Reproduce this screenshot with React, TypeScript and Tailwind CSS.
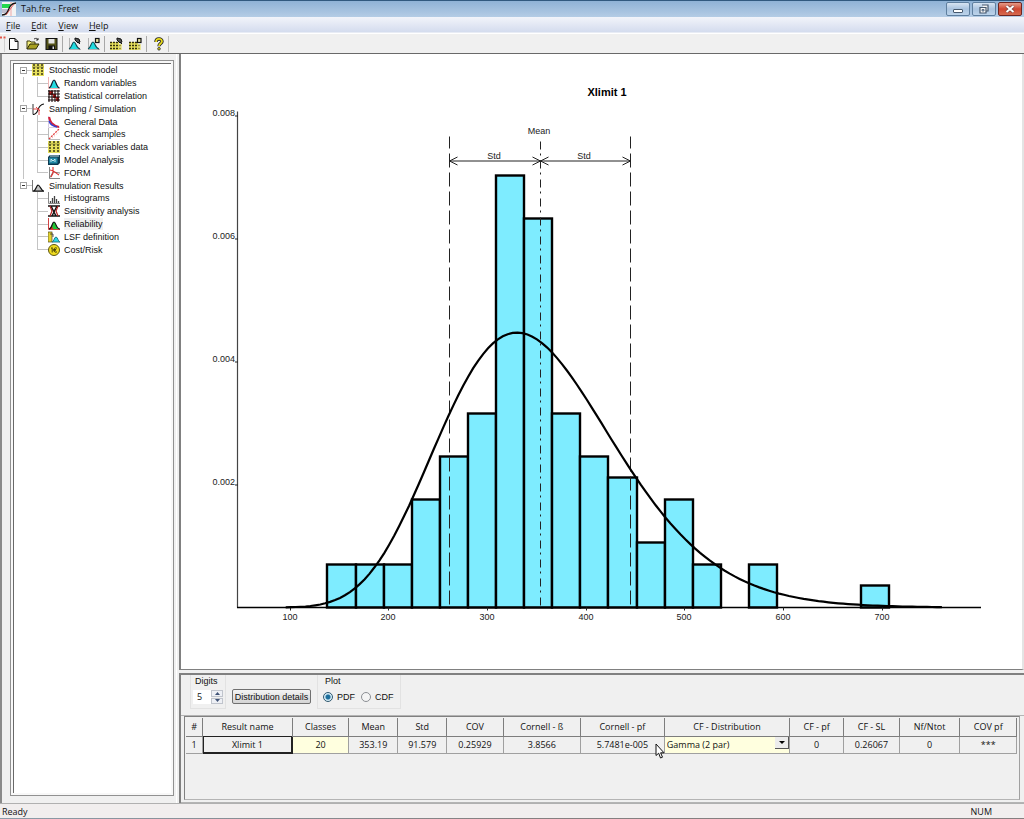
import type { ReactNode } from "react";

const SANS = "font-['Liberation_Sans',sans-serif]";
const HUMANIST = "font-['Open_Sans','Noto_Sans',sans-serif]";

/* ---------- icons ---------- */

type IconName =
  | "table" | "bell" | "matrix" | "sampling" | "decay" | "scatter" | "model" | "form"
  | "results" | "histogram" | "hourglass" | "reliability" | "lsf" | "cost";

const dottedTable = (
  <>
    <rect x="0" y="0" width="12" height="12" fill="#e6df5c" />
    <path d="M2 0v12M6 0v12M10 0v12" stroke="#2c2a10" strokeWidth="1.4" strokeDasharray="2 1" />
    <path d="M0 3h12" stroke="#77722c" strokeWidth=".6" />
  </>
);

const icons: Record<IconName, ReactNode> = {
  table: dottedTable,
  bell: (
    <>
      <path d="M.5 0v11.500h11" stroke="#f0b4b4" fill="none" />
      <path d="M1 11C4 10 4 3 6 3s2 7 5.500 8z" fill="#23dbe0" />
      <path d="M1 11C4 10 4 3 6 3s2 7 5.500 8" stroke="#123" strokeWidth="1.200" fill="none" />
    </>
  ),
  matrix: (
    <>
      <rect width="12" height="12" fill="#fff" />
      <path d="M1 1h4v3h3v3h3v4H8V8H5V5H1z" fill="#d32020" />
      <path d="M0 1h12M0 4h12M0 7h12M0 10h12M1 0v12M4 0v12M7 0v12M10 0v12" stroke="#1c0d0d" strokeWidth="1.100" />
    </>
  ),
  sampling: (
    <>
      <path d="M1 1v10.500" stroke="#333" fill="none" />
      <path d="M1 11.500c7 0 3-10 11-10.500" stroke="#111" strokeWidth="1.200" fill="none" />
      <path d="M1 6h6v6M4 4l4 4" stroke="#e23a3a" strokeWidth=".9" fill="none" />
    </>
  ),
  decay: (
    <>
      <path d="M.5 0v11.500H12" stroke="#d9cde2" fill="none" />
      <path d="M1 1c1 5 3 8 10 10" stroke="#d3203a" strokeWidth="2.200" fill="none" />
      <path d="M1 5c1 3 3 5 8 6" stroke="#3340d0" strokeWidth="1.400" fill="none" />
    </>
  ),
  scatter: (
    <>
      <path d="M.5 0v11.500H12" stroke="#bbb" fill="none" />
      <path d="M1 11L11 1" stroke="#e23a3a" strokeWidth="1.300" strokeDasharray="2 1" />
      <path d="M4 10l7-6" stroke="#f0a0a0" strokeDasharray="1 2" />
    </>
  ),
  model: (
    <>
      <path d="M0 3l2-2h10v8l-2 2H0z" fill="#0d3950" />
      <rect x="1" y="3.500" width="8.500" height="6" fill="#2489a6" />
      <path d="M3 8V5l2 2 2-2v3M2 2h9" stroke="#d8f3f7" strokeWidth=".9" fill="none" />
    </>
  ),
  form: (
    <>
      <path d="M1.500 0v11.500H12M1.500 11L5 5l7 1" stroke="#777" strokeWidth=".9" fill="none" />
      <path d="M2 3c4 0 5 3 9 5M5 0v6L3 10" stroke="#e02a2a" strokeWidth="1.100" fill="none" />
    </>
  ),
  results: (
    <>
      <path d="M.5 0v11.500H12" stroke="#777" fill="none" />
      <path d="M1 11c3 0 3-5 5-6 2 0 3 6 6 6z" fill="#c3c3c3" stroke="#111" strokeWidth="1.200" />
    </>
  ),
  histogram: (
    <>
      <path d="M.5 0v11.500H12" stroke="#888" fill="none" />
      <path d="M2.500 11V9M4.500 11V6M6.500 11V4M8.500 11V7M10.500 11V9" stroke="#444" strokeWidth="1.300" />
    </>
  ),
  hourglass: (
    <>
      <path d="M0 1h12M0 11h12M3 1l5 10M9 1L4 11" stroke="#111" strokeWidth="1.500" />
      <path d="M2 1l2 5-2 5M10 1L8 6l2 5" stroke="#b52020" strokeWidth="1.200" fill="none" />
    </>
  ),
  reliability: (
    <>
      <path d="M.5 0v11.500H12" stroke="#d24343" fill="none" />
      <path d="M1 11c3 0 3-7 5-7s2 7 6 7z" fill="#1fc634" />
      <path d="M1 11l3-3 1 3z" fill="#df2020" />
      <path d="M1 11c3 0 3-7 5-7s2 7 6 7" stroke="#111" strokeWidth="1.200" fill="none" />
    </>
  ),
  lsf: (
    <>
      <rect x="0" y="1" width="4" height="10" fill="#e4d431" stroke="#4b4620" strokeWidth=".7" />
      <path d="M4 11c2 0 2-5 4-5s2 5 4 5z" fill="#29d6e5" stroke="#1c7080" strokeWidth=".9" />
      <path d="M2 3h3v3" stroke="#333" strokeWidth=".8" fill="none" />
    </>
  ),
  cost: (
    <>
      <circle cx="6" cy="6" r="5.500" fill="#f0dc20" stroke="#5d5510" />
      <path d="M3 4.500L4.200 3.500V8.500M9 4.200C6.500 3 5.800 5 5.900 6s.8 3 3.100 1.900M5.400 5.500h2.800M5.400 6.700h2.500" stroke="#3a3508" strokeWidth=".9" fill="none" />
    </>
  ),
};

function Icon({ name }: { name: IconName }) {
  return (
    <svg viewBox="0 0 12 12" className="size-3 shrink-0" aria-hidden="true">
      {icons[name]}
    </svg>
  );
}

/* ---------- toolbar ---------- */

const curveTool = (
  <>
    <path d="M1.500 1v11.500H13" stroke="#999" strokeWidth=".7" fill="none" />
    <path d="M1 12c3-1 3-7 5-7s2 6 6 7z" fill="#20dce0" />
    <path d="M1 12c3-1 3-7 5-7s2 6 6 7" stroke="#124a55" strokeWidth="1.100" fill="none" />
  </>
);
const gridTool = (
  <>
    <path d="M0 5h9v8H0z" fill="#e6df5c" />
    <path d="M0 5.500h9M0 8.500h12M0 11.500h12" stroke="#35320f" strokeWidth="1.300" strokeDasharray="2 1" />
    <path d="M9 7h3v6H9z" fill="#e6df5c" fillOpacity=".6" />
  </>
);
const hand = <path d="M7 1l4 1 1 3-2 1-3-3zM10 5l2 2" fill="#555" stroke="#111" strokeWidth="1" />;
const sheet = <rect x="8.500" y="1.500" width="3.500" height="4" fill="#e8e4a0" stroke="#111" strokeWidth="1.200" />;

const tools: { label: string; gap?: boolean; art: ReactNode }[] = [
  { label: "New", art: <path d="M2.500 1.500h5.500l3 3v8h-8.500zM8 1.500v3h3" fill="#fff" stroke="#111" /> },
  {
    label: "Open",
    art: (
      <>
        <path d="M1 12V4h3l1 1h4v2" fill="#f2ec7a" stroke="#3c3a10" />
        <path d="M1 12l3-5h9l-3 5z" fill="#a8a022" stroke="#2d2b08" />
        <path d="M8 2c2-1 3-1 4 1m0-2v2h-2" stroke="#222" fill="none" strokeWidth=".9" />
      </>
    ),
  },
  {
    label: "Save",
    art: (
      <>
        <rect x="1" y="1.500" width="11" height="11" fill="#55541a" stroke="#111" />
        <rect x="3.500" y="2" width="6" height="4.500" fill="#e4e4e4" />
        <rect x="3.500" y="8.500" width="6.500" height="4" fill="#111" />
        <rect x="7.500" y="9.500" width="1.500" height="2.500" fill="#ddd" />
      </>
    ),
  },
  { label: "Edit variable", gap: true, art: <>{curveTool}{hand}</> },
  { label: "Copy variable", art: <>{curveTool}{sheet}</> },
  { label: "Edit table", gap: true, art: <>{gridTool}{hand}</> },
  { label: "Copy table", art: <>{gridTool}{sheet}</> },
  {
    label: "Help topics",
    gap: true,
    art: (
      <>
        <path d="M4 5c0-4 6-4 6-.5C10 6.500 7 6.500 7 9.200" stroke="#222" strokeWidth="3.400" fill="none" />
        <path d="M4 5c0-4 6-4 6-.5C10 6.500 7 6.500 7 9" stroke="#e9dc1c" strokeWidth="1.700" fill="none" />
        <circle cx="7" cy="11.800" r="1.300" fill="#e9dc1c" stroke="#222" strokeWidth=".8" />
      </>
    ),
  },
];

function Toolbar() {
  return (
    <div className="flex h-5 items-center border-t border-white bg-[#f0f0f0]">
      <svg viewBox="0 0 6 16" className="h-4 w-1.5 shrink-0" aria-hidden="true">
        <path d="M0 1.500h2M3.500 1.500h2" stroke="#e0574a" strokeWidth="2" />
        <path d="M4.500 3v13" stroke="#d0d0d0" />
      </svg>
      {tools.map((t, i) => (
        <div key={t.label} className={i === 0 ? "-ml-0.5 flex items-center" : "flex items-center"}>
          {t.gap && <span className="ml-px mr-0.5 h-4 w-px bg-[#a8a8a8]" />}
          <button type="button" aria-label={t.label} className="flex w-[19px] justify-center">
            <svg viewBox="0 0 14 14" className="size-3.5" aria-hidden="true">{t.art}</svg>
          </button>
        </div>
      ))}
      <span className="h-4 w-px bg-[#c0c0c0]" />
    </div>
  );
}

/* ---------- tree ---------- */

const tree: { label: string; icon: IconName; children: { label: string; icon: IconName }[] }[] = [
  {
    label: "Stochastic model", icon: "table",
    children: [
      { label: "Random variables", icon: "bell" },
      { label: "Statistical correlation", icon: "matrix" },
    ],
  },
  {
    label: "Sampling / Simulation", icon: "sampling",
    children: [
      { label: "General Data", icon: "decay" },
      { label: "Check samples", icon: "scatter" },
      { label: "Check variables data", icon: "table" },
      { label: "Model Analysis", icon: "model" },
      { label: "FORM", icon: "form" },
    ],
  },
  {
    label: "Simulation Results", icon: "results",
    children: [
      { label: "Histograms", icon: "histogram" },
      { label: "Sensitivity analysis", icon: "hourglass" },
      { label: "Reliability", icon: "reliability" },
      { label: "LSF definition", icon: "lsf" },
      { label: "Cost/Risk", icon: "cost" },
    ],
  },
];

function Tree() {
  const rows = tree.flatMap((g, gi) => [
    { ...g, level: 0, last: false, trunk: false },
    ...g.children.map((c, ci) => ({
      ...c, level: 1, last: ci === g.children.length - 1, trunk: gi < tree.length - 1,
    })),
  ]);
  return (
    <nav aria-label="Model" className={`grid h-48 auto-rows-fr pl-[5px] text-[9px] leading-3 text-[#111] ${SANS}`}>
      {rows.map((r) =>
        r.level === 0 ? (
          <div key={r.label} className="flex items-stretch">
            <span className="flex w-[14px] items-center">
              <button type="button" aria-label={`Collapse ${r.label}`} className="ml-0.5 flex size-[7px] items-center justify-center border border-[#a5a5a5] bg-white">
                <span className="h-px w-[3px] bg-[#333]" />
              </button>
              <span className="h-px flex-1 bg-[#c4c4c4]" />
            </span>
            <a href="#" className="flex items-center gap-[5px]"><Icon name={r.icon} />{r.label}</a>
          </div>
        ) : (
          <div key={r.label} className="flex items-stretch">
            <span className={`ml-[5px] w-[14px] border-l ${r.trunk ? "border-[#c4c4c4]" : "border-transparent"}`} />
            <span className="flex w-[11px] flex-col">
              <span className="flex-1 border-b border-l border-[#c4c4c4]" />
              <span className={`flex-1 border-l ${r.last ? "border-transparent" : "border-[#c4c4c4]"}`} />
            </span>
            <a href="#" className="flex items-center gap-1">
              <Icon name={r.icon} />
              <span className={r.label === "Reliability" ? "bg-[#f0f0f0]" : ""}>{r.label}</span>
            </a>
          </div>
        ),
      )}
    </nav>
  );
}

/* ---------- chart ---------- */

const MEAN = 353.19;
const STD = 91.579;
const BASE = 552;
const px = (v: number) => 10 + v * 0.9867;
const py = (d: number) => BASE - d * 61500;

const binStart = 138.300;
const binWidth = 28.480;
const unit = 21.600;
const counts = [2, 2, 2, 5, 7, 9, 20, 18, 9, 7, 6, 3, 5, 2, 0, 2, 0, 0, 0, 1];
const edge = (i: number) => Math.round(px(binStart + i * binWidth));

const shape = (MEAN / STD) ** 2;
const scale = (STD * STD) / MEAN;
const mode = (shape - 1) * scale;
const peak = 0.00447;
const density = (x: number) =>
  peak * Math.exp((shape - 1) * Math.log(x / mode) - (x - mode) / scale);
const curve = Array.from({ length: 134 }, (_, i) => 95 + i * 5)
  .map((x, i) => `${i ? "L" : "M"}${px(x + 1).toFixed(1)} ${py(density(x)).toFixed(1)}`)
  .join("");

function Chart() {
  const low = Math.round(px(MEAN - STD)) + 0.5;
  const high = Math.round(px(MEAN + STD)) + 0.5;
  const mid = Math.ceil(px(MEAN)) + 0.5;
  return (
    <svg viewBox="0 -1 841 614" className={`block h-full w-full ${SANS}`} role="img" aria-label="Histogram of Xlimit 1">
      <g fill="#7eecff" stroke="#000" strokeWidth="2.400">
        {counts.map((n, i) => {
          const h = Math.round(n * unit);
          return n ? <rect key={i} x={edge(i)} y={BASE - h} width={edge(i + 1) - edge(i)} height={h} /> : null;
        })}
      </g>
      <path d="M56.500 56V552" stroke="#444" strokeWidth="1.200" />
      <path d="M56 552H800" stroke="#000" strokeWidth="1.600" />
      {[0.002, 0.004, 0.006, 0.008].map((d) => (
        <g key={d}>
          <path d={`M54 ${Math.round(py(d)) + 0.5}h3`} stroke="#222" />
          <text x="54" y={Math.round(py(d))} textAnchor="end" fontSize="9" fill="#222">{d}</text>
        </g>
      ))}
      {[100, 200, 300, 400, 500, 600, 700].map((v) => (
        <g key={v}>
          <path d={`M${Math.round(px(v)) + 0.5} 552v3`} stroke="#222" />
          <text x={Math.round(px(v))} y="564" textAnchor="middle" fontSize="9" fill="#222">{v}</text>
        </g>
      ))}
      <g stroke="#222" fill="none">
        <path d={`M${low} 81V552`} strokeDasharray="14 5" strokeDashoffset="2" />
        <path d={`M${high} 81V552`} strokeDasharray="14 5" strokeDashoffset="2" />
        <path d={`M${mid} 86V552`} strokeDasharray="8 4 2 5" />
        <path d={`M${low} 105.500H${high}`} />
        <path d={`M${low + 8} 101.500L${low} 105.500l8 4M${mid - 8} 101.500L${mid} 105.500l-8 4M${mid + 8} 101.500L${mid} 105.500l8 4M${high - 8} 101.500L${high} 105.500l-8 4`} />
      </g>
      <path d={curve} fill="none" stroke="#000" strokeWidth="2.200" />
      <g fill="#222" fontSize="9" textAnchor="middle">
        <text x="358" y="78">Mean</text>
        <text x="313" y="103">Std</text>
        <text x="403" y="103">Std</text>
      </g>
      <text x="426" y="40" textAnchor="middle" fontSize="11" fontWeight="700">Xlimit 1</text>
    </svg>
  );
}

/* ---------- controls and table ---------- */

function Controls() {
  return (
    <form className={`flex h-[39px] items-start pl-[9px] text-[9px] leading-3 text-[#111] ${SANS}`}>
      <div className="flex h-[34px] w-9 flex-col border border-t-0 border-[#e2e2e2]">
        <label htmlFor="digits" className="pl-1">Digits</label>
        <div className="mt-[3px] flex h-[14px] pl-0.5">
          <input id="digits" type="text" defaultValue="5" className={`w-[18px] bg-white pl-1 text-[9px] ${HUMANIST}`} />
          <span className="flex w-3 flex-col gap-px">
            <button type="button" aria-label="Increase" className="flex flex-1 items-center justify-center border border-[#c0c4cc] bg-[#eef0f5]">
              <svg viewBox="0 0 5 3" className="h-[3px] w-[5px]"><path d="M0 3L2.500 0 5 3z" fill="#3f5276" /></svg>
            </button>
            <button type="button" aria-label="Decrease" className="flex flex-1 items-center justify-center border border-[#c0c4cc] bg-[#eef0f5]">
              <svg viewBox="0 0 5 3" className="h-[3px] w-[5px]"><path d="M0 0L2.500 3 5 0z" fill="#3f5276" /></svg>
            </button>
          </span>
        </div>
      </div>
      <button type="button" className="ml-1.5 mt-[14px] flex h-[15px] w-[79px] items-center justify-center whitespace-nowrap rounded-[2px] border border-[#707070] bg-linear-to-b from-[#f4f4f4] to-[#d4d4d4] leading-3">
        Distribution details
      </button>
      <fieldset className="ml-1.5 h-[34px] w-[80px] border border-t-0 border-[#e2e2e2]">
        <legend className="float-left w-full pl-[7px]">Plot</legend>
        <div className="flex w-full items-center pl-[5px] pt-1">
          {["PDF", "CDF"].map((p) => (
            <label key={p} className="mr-1.5 flex items-center gap-1">
              <input type="radio" name="plot" defaultChecked={p === "PDF"} className="size-2.5 appearance-none rounded-full border border-[#8c8f94] bg-[#f4f4f4] checked:border-[#31586f] checked:bg-[radial-gradient(circle,#1d6f9c_35%,#d8eef8_55%)]" />
              {p}
            </label>
          ))}
        </div>
      </fieldset>
    </form>
  );
}

const columns: { head: string; value: string; width: string }[] = [
  { head: "#", value: "1", width: "w-[2%]" },
  { head: "Result name", value: "Xlimit 1", width: "w-[10.8%]" },
  { head: "Classes", value: "20", width: "w-[6.8%]" },
  { head: "Mean", value: "353.19", width: "w-[5.9%]" },
  { head: "Std", value: "91.579", width: "w-[5.9%]" },
  { head: "COV", value: "0.25929", width: "w-[6.8%]" },
  { head: "Cornell - ß", value: "3.8566", width: "w-[9.3%]" },
  { head: "Cornell - pf", value: "5.7481e-005", width: "w-[10.1%]" },
  { head: "CF - Distribution", value: "Gamma (2 par)", width: "w-[15.1%]" },
  { head: "CF - pf", value: "0", width: "w-[6.5%]" },
  { head: "CF - SL", value: "0.26067", width: "w-[6.7%]" },
  { head: "Nf/Ntot", value: "0", width: "w-[7.3%]" },
  { head: "COV pf", value: "***", width: "w-[6.8%]" },
];

function cellStyle(head: string) {
  if (head === "Result name") return "outline-1 -outline-offset-1 outline-[#222] border-[#222]";
  if (head === "Classes" || head === "CF - Distribution") return "bg-[#ffffdf] border-[#a0a0a0]";
  return "border-[#a0a0a0]";
}

function ResultTable() {
  return (
    <table className={`w-full table-fixed border-collapse text-center text-[9px] leading-3 text-[#111] ${HUMANIST}`}>
      <thead>
        <tr className="h-[18px]">
          {columns.map((c) => (
            <th key={c.head} scope="col" className={`whitespace-nowrap border border-t-0 border-l-0 border-[#7d7d7d] p-0 font-normal ${c.width}`}>
              {c.head}
            </th>
          ))}
        </tr>
      </thead>
      <tbody>
        <tr className="h-[17px]">
          {columns.map((c) => (
            <td key={c.head} className={`border border-l-0 p-0 ${cellStyle(c.head)}`}>
              {c.head === "CF - Distribution" ? (
                <span className="flex h-4 items-center">
                  <select aria-label="CF - Distribution" className="min-w-0 flex-1 appearance-none bg-transparent pl-0.5 text-left">
                    <option>Gamma (2 par)</option>
                  </select>
                  <span className="pointer-events-none mb-1 flex h-3 w-[14px] items-center justify-center border-b border-r border-[#555] bg-[#ececec]">
                    <svg viewBox="0 0 6 3" className="h-[3px] w-1.5"><path d="M0 0h6L3 3z" /></svg>
                  </span>
                </span>
              ) : c.value}
            </td>
          ))}
        </tr>
      </tbody>
    </table>
  );
}

/* ---------- window ---------- */

function TitleBar() {
  const btn = "flex h-[14px] w-6 items-center justify-center rounded-[2px] border";
  const plain = "border-[#5f7f9f] bg-linear-to-b from-[#d7e4f2] via-[#a9c3df] to-[#bcd3ea]";
  return (
    <header className={`flex h-[17px] shrink-0 items-center border-t border-[#31597f] bg-linear-to-b from-[#8fb2d6] to-[#b4cce5] pl-0.5 pr-0.5 text-[9px] leading-3 text-[#111] ${HUMANIST}`}>
      <svg viewBox="0 0 14 14" className="size-3.5" aria-hidden="true">
        <path d="M0 0h14v14H0z" fill="#f3f3f3" />
        <path d="M0 2h9L7 6H0z" fill="#23d84e" />
        <path d="M0 8h6M0 10h5" stroke="#88a" />
        <path d="M9 0v14" stroke="#e88" strokeWidth=".7" />
        <path d="M0 13c9 0 4-11 14-12" stroke="#111" strokeWidth="1.300" fill="none" />
        <path d="M4 13l8-11" stroke="#e03030" strokeWidth=".7" />
      </svg>
      <h1 className="ml-[5px] flex-1">Tah.fre - Freet</h1>
      <div className="flex gap-0.5">
        <button type="button" aria-label="Minimize" className={`${btn} ${plain}`}>
          <span className="mt-1 h-1 w-2.5 rounded-[1px] border border-[#47596e] bg-white" />
        </button>
        <button type="button" aria-label="Restore" className={`${btn} ${plain}`}>
          <svg viewBox="0 0 12 10" className="h-2.5 w-3">
            <path d="M4 1h6v6H8M2 3.500h6V9H2z" fill="#f4f4f4" stroke="#47596e" strokeWidth="1.200" />
            <path d="M4 5.500h2V7H4z" fill="#a9c3df" stroke="#47596e" strokeWidth=".8" />
          </svg>
        </button>
        <button type="button" aria-label="Close" className={`${btn} border-[#6f2520] bg-linear-to-b from-[#e39a88] via-[#cf4530] to-[#d56a50]`}>
          <svg viewBox="0 0 10 8" className="h-2 w-2.5">
            <path d="M1.500 1l7 6M8.500 1l-7 6" stroke="#6b3a38" strokeWidth="3.200" />
            <path d="M1.500 1l7 6M8.500 1l-7 6" stroke="#fff" strokeWidth="2" />
          </svg>
        </button>
      </div>
    </header>
  );
}

export default function App() {
  return (
    <div className="flex h-screen flex-col overflow-hidden bg-[#f0f0f0]">
      <TitleBar />
      <nav aria-label="Menu" className={`flex h-4 shrink-0 items-center gap-[11px] border-b border-[#e8ecf5] bg-linear-to-b from-[#f2f4fa] to-[#d4dcee] pl-1.5 pt-0.5 text-[9px] leading-3 text-[#111] ${HUMANIST}`}>
        {["File", "Edit", "View", "Help"].map((m) => (
          <button key={m} type="button">
            <span className="underline">{m[0]}</span>{m.slice(1)}
          </button>
        ))}
      </nav>
      <Toolbar />

      <main className="flex min-h-0 flex-1 border-t border-[#696969]">
        <aside className="flex w-[177px] shrink-0 border-l-2 border-r border-l-[#8a8a8a] border-r-white pb-[7px] pl-2 pr-0.5 pt-1.5">
          <div className="flex-1 border border-[#919191] bg-[#f8f8f8] p-0.5">
            <div className="h-full border-l border-t border-[#696969] bg-white">
              <div className="-ml-px">
                <Tree />
              </div>
            </div>
          </div>
        </aside>

        <section className="ml-0.5 flex min-w-0 flex-1 flex-col">
          <div className="min-h-0 flex-1 border-b border-l-2 border-r-2 border-[#808080] border-r-[#e4e4e4] bg-white">
            <Chart />
          </div>
          <div className="mt-[3px] flex h-[130px] shrink-0 flex-col border-l-2 border-t-2 border-[#808080]">
            <Controls />
            <div className="mt-px flex-1 border-b border-t border-[#b4b4b4] pb-0.5 pl-[3px] pr-1">
              <div className="h-full border border-[#808080] border-b-[#b4b4b4] border-r-[#a0a0a0] bg-[#f0f0f0] pl-px pr-0.5 pt-px">
                <ResultTable />
              </div>
            </div>
          </div>
        </section>
      </main>

      <footer className={`flex h-[15px] shrink-0 items-center justify-between border-t border-[#b0b0b0] bg-[#f1eeee] pl-0.5 pr-8 pt-0.5 text-[9px] leading-3 text-[#111] ${HUMANIST}`}>
        <span>Ready</span>
        <span>NUM</span>
      </footer>
      <div className="h-px shrink-0 bg-linear-to-r from-[#8b9ba8] via-[#857f80] to-[#857f80]" />

      <svg viewBox="0 0 10 16" className="pointer-events-none absolute left-[655px] top-[743px] h-4 w-2.5" aria-hidden="true">
        <path d="M1 1v11.500l2.700-2.300L5.500 15l2-.8-1.900-4.400H9z" fill="#fff" stroke="#111" strokeWidth="1" />
      </svg>
    </div>
  );
}
